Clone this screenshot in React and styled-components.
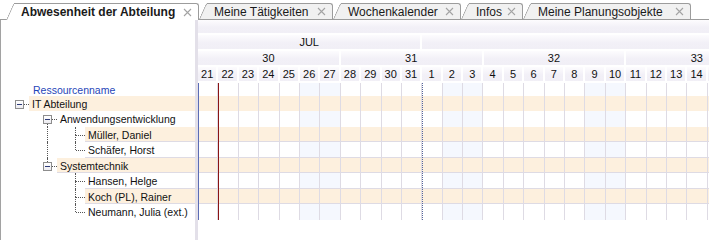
import React from "react";
import styled, { createGlobalStyle } from "styled-components";

const COL = 20.4;
const ORANGE = "#fdf0de";
const GRID = "#dedbe4";

const GlobalStyle = createGlobalStyle`
  html, body { margin: 0; padding: 0; background: #fff; }
  body { font-family: "Liberation Sans", Arial, sans-serif; color: #111; }
`;

const tabs = [
  { label: "Abwesenheit der Abteilung", w: 193, active: true },
  { label: "Meine Tätigkeiten", w: 134 },
  { label: "Wochenkalender", w: 128 },
  { label: "Infos", w: 62 },
  { label: "Meine Planungsobjekte", w: 168 },
];

// 21 Jul (Monday) .. 17 Aug; only the first 25 fit in the window
const days = [...Array(11)]
  .map((_, i) => 21 + i)
  .concat([...Array(17)].map((_, i) => i + 1));
const VISIBLE = 25;

const tree = [
  { label: "IT Abteilung", level: 0, box: true, first: true, last: true, cont: [] },
  { label: "Anwendungsentwicklung", level: 1, box: true, first: true, last: false, cont: [false] },
  { label: "Müller, Daniel", level: 2, first: true, last: false, cont: [false, true], line: true },
  { label: "Schäfer, Horst", level: 2, first: false, last: true, cont: [false, true], line: true },
  { label: "Systemtechnik", level: 1, box: true, first: false, last: true, cont: [false], line: true },
  { label: "Hansen, Helge", level: 2, first: true, last: false, cont: [false, false], line: true },
  { label: "Koch (PL), Rainer", level: 2, first: false, last: false, cont: [false, false], line: true },
  { label: "Neumann, Julia (ext.)", level: 2, first: false, last: true, cont: [false, false] },
];

const Page = styled.div`
  width: 709px;
  height: 240px;
  overflow: hidden;
  display: flex;
  flex-direction: column;
  background: #fff;
`;

const TabBar = styled.div`
  flex: none;
  height: 19px;
  display: flex;
  align-items: flex-end;
  padding-left: 6px;
  border-bottom: 1px solid #9c9c9c;
`;

const Tab = styled.div`
  position: relative;
  z-index: ${(p) => p.$z};
  flex: none;
  width: ${(p) => p.$w}px;
  height: ${(p) => (p.$active ? 17 : 16)}px;
  margin-bottom: ${(p) => (p.$active ? -1 : 0)}px;
  padding-left: 8px;
  box-sizing: border-box;
  display: flex;

  &::before {
    content: "";
    position: absolute;
    left: 0;
    top: 0;
    bottom: 0;
    width: 20px;
    background: ${(p) => (p.$active ? "#fff" : "#f1f1f1")};
    border-left: 1px solid #9c9c9c;
    border-top: 1px solid #9c9c9c;
    border-top-left-radius: 3px;
    transform: skewX(-24deg);
    transform-origin: bottom left;
  }
`;

const TabBody = styled.div`
  position: relative;
  flex: 1;
  display: flex;
  align-items: center;
  padding: 0 6px 0 7px;
  background: ${(p) => (p.$active ? "#fff" : "#f1f1f1")};
  border-top: 1px solid #9c9c9c;
  border-right: 1px solid #9c9c9c;
  border-top-right-radius: 3px;
  font-size: 12px;
  font-weight: ${(p) => (p.$active ? 700 : 400)};
  color: #1a1a1a;
  white-space: nowrap;
`;

const Close = styled.svg`
  margin-left: auto;
  flex: none;
`;

const Content = styled.div`
  flex: 1;
  min-height: 0;
  display: flex;
`;

const LeftPane = styled.div`
  flex: none;
  width: 195px;
  box-sizing: border-box;
  border-left: 1px solid #a2a2a2;
  display: flex;
  flex-direction: column;
`;

const PaneHead = styled.div`
  flex: none;
  height: 63px;
`;

const ColumnTitle = styled.div`
  flex: none;
  height: 13px;
  display: flex;
  align-items: center;
  padding-left: 32px;
  font-size: 10.5px;
  color: #1f45b8;
`;

const TreeRow = styled.div`
  flex: none;
  height: ${(p) => p.$h}px;
  display: flex;
  padding-left: 5px;
`;

const Guide = styled.div`
  position: relative;
  flex: none;
  width: 28px;

  &::before {
    content: "";
    display: ${(p) => (p.$v ? "block" : "none")};
    position: absolute;
    left: 13px;
    top: 0;
    bottom: 0;
    border-left: 1px dotted #555;
  }
`;

const Elbow = styled.div`
  position: relative;
  flex: none;
  width: 23px;
`;

const VSeg = styled.div`
  position: absolute;
  left: 13px;
  top: ${(p) => (p.$up ? 0 : 8)}px;
  height: ${(p) => (p.$up ? 8 : p.$rest)}px;
  border-left: 1px dotted #555;
`;

const HSeg = styled.div`
  position: absolute;
  left: 14px;
  right: 0;
  top: 8px;
  border-top: 1px dotted #555;
`;

const Toggle = styled.div`
  position: absolute;
  left: 9px;
  top: 4px;
  width: 9px;
  height: 9px;
  box-sizing: border-box;
  border: 1px solid #8d8d8d;
  background: linear-gradient(#fff, #ecebf0);

  &::after {
    content: "";
    position: absolute;
    left: 1px;
    right: 1px;
    top: 3px;
    height: 1px;
    background: #2c3b78;
  }
`;

const Label = styled.div`
  flex: 1;
  display: flex;
  align-items: center;
  padding-left: 3px;
  font-size: 10.5px;
  color: #111;
  white-space: nowrap;
  background: ${(p) => (p.$alt ? ORANGE : "transparent")};
  box-shadow: ${(p) => (p.$line ? `inset 0 -1px 0 ${GRID}` : "none")};
`;

const Splitter = styled.div`
  flex: none;
  width: 3px;
  background: #e3e0e9;
`;

const Timeline = styled.div`
  flex: 1;
  min-width: 0;
  overflow: hidden;
  display: flex;
  flex-direction: column;
`;

const HeadRow = styled.div`
  flex: none;
  display: flex;
  height: ${(p) => p.$h}px;
`;

const HeadCell = styled.div`
  flex: none;
  width: ${(p) => p.$w}px;
  box-sizing: border-box;
  border-right: 2px solid #fff;
  border-bottom: 2px solid #fff;
  background: linear-gradient(#fdfcfe 0%, #f2f0f7 55%, #f1eff6 100%);
  display: flex;
  align-items: center;
  justify-content: center;
  font-size: 11px;
  color: #111;
  white-space: nowrap;
`;

const Body = styled.div`
  position: relative;
  flex: none;
  display: flex;
  flex-direction: column;
`;

const GridRow = styled.div`
  flex: none;
  display: flex;
  height: ${(p) => p.$h}px;
  background: ${(p) => (p.$alt ? ORANGE : "#fff")};
`;

const DayCell = styled.div`
  flex: none;
  width: ${COL}px;
  box-sizing: border-box;
  border-right: 1px solid ${GRID};
  border-bottom: ${(p) => (p.$line ? `1px solid ${GRID}` : "none")};
  background: ${(p) => (p.$weekend && !p.$alt ? "#f5f8fe" : "transparent")};
`;

const Marker = styled.div`
  position: absolute;
  top: 0;
  bottom: 0;
  left: ${(p) => p.$x}px;
  border-left: 1px ${(p) => (p.$dotted ? "dotted" : "solid")} ${(p) => p.$color};
`;

function CloseIcon() {
  return (
    <Close width="9" height="9" viewBox="0 0 9 9">
      <path d="M1 1 L8 8 M8 1 L1 8" stroke="#a3a3a3" strokeWidth="1.1" fill="none" />
    </Close>
  );
}

function TreeLine({ node, h, alt }) {
  return (
    <TreeRow $h={h}>
      {node.cont.map((v, i) => (
        <Guide key={i} $v={v} />
      ))}
      <Elbow>
        {(!node.box || !node.first) && <VSeg $up />}
        {!node.last && <VSeg $rest={h - 8} />}
        <HSeg />
        {node.box && <Toggle />}
      </Elbow>
      <Label $alt={alt} $line={node.line}>
        {node.label}
      </Label>
    </TreeRow>
  );
}

function DayCells({ alt, line }) {
  return days.map((d, i) => (
    <DayCell key={i} $weekend={i % 7 >= 5} $alt={alt} $line={line} />
  ));
}

export default function App() {
  const rowH = (i) => (i % 2 ? 16 : 15);
  return (
    <>
      <GlobalStyle />
      <Page>
        <TabBar>
          {tabs.map((t, i) => (
            <Tab key={t.label} $w={t.w} $active={t.active} $z={t.active ? 20 : i + 1}>
              <TabBody $active={t.active}>
                {t.label}
                <CloseIcon />
              </TabBody>
            </Tab>
          ))}
        </TabBar>
        <Content>
          <LeftPane>
            <PaneHead />
            <ColumnTitle>Ressourcenname</ColumnTitle>
            {tree.map((n, i) => (
              <TreeLine key={n.label} node={n} h={rowH(i)} alt={i % 2 === 0} />
            ))}
          </LeftPane>
          <Splitter />
          <Timeline>
            <HeadRow $h={15}>
              <HeadCell $w={28 * COL} />
            </HeadRow>
            <HeadRow $h={16}>
              <HeadCell $w={11 * COL}>JUL</HeadCell>
              <HeadCell $w={31 * COL} />
            </HeadRow>
            <HeadRow $h={16}>
              {[30, 31, 32, 33].map((w) => (
                <HeadCell key={w} $w={7 * COL}>
                  {w}
                </HeadCell>
              ))}
            </HeadRow>
            <HeadRow $h={16}>
              {days.map((d, i) => (
                <HeadCell key={i} $w={COL}>
                  {i < VISIBLE ? d : null}
                </HeadCell>
              ))}
            </HeadRow>
            <Body>
              <GridRow $h={13}>
                <DayCells />
              </GridRow>
              {tree.map((n, i) => (
                <GridRow key={n.label} $h={rowH(i)} $alt={i % 2 === 0}>
                  <DayCells alt={i % 2 === 0} line={n.line} />
                </GridRow>
              ))}
              <Marker $x={0} $color="#5b6cb5" />
              <Marker $x={COL} $color="#8b1414" />
              <Marker $x={11 * COL} $color="#56679c" $dotted />
            </Body>
          </Timeline>
        </Content>
      </Page>
    </>
  );
}
